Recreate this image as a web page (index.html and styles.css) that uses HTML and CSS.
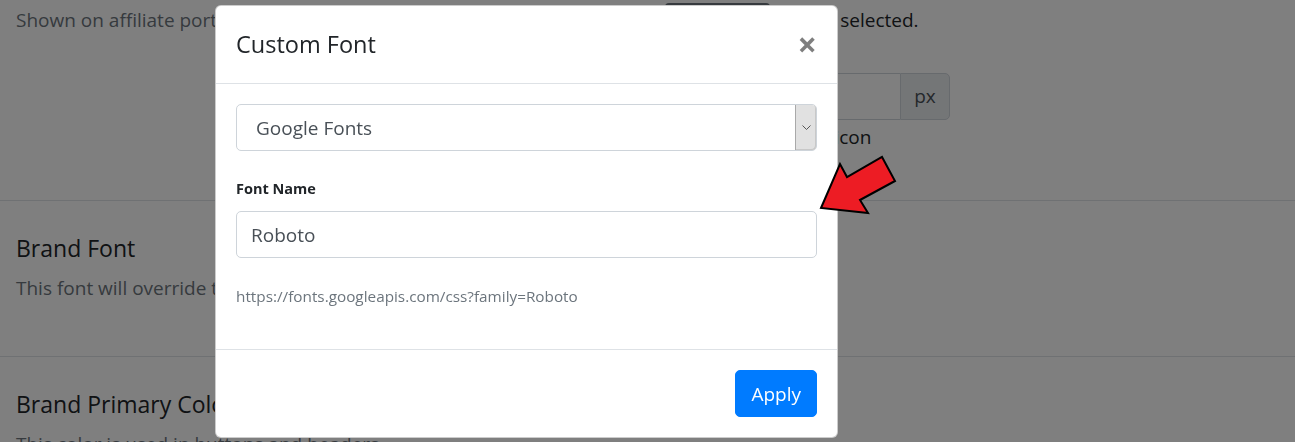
FILE: index.html
```html
<!DOCTYPE html>
<html lang="en">
<head>
<meta charset="utf-8">
<title>Custom Font</title>
<link rel="stylesheet" href="styles.css">
</head>
<body>
<main class="page">
  <section class="setting setting-first">
    <div class="s-left">
      <p class="muted first-desc">Shown on affiliate portal header and in emails.</p>
    </div>
    <div class="s-right">
      <div class="upload">
        <span class="file-btn">Choose file</span>
        <span class="upload-text">No file selected.</span>
      </div>
      <div class="input-group">
        <span class="ig-input">32</span>
        <span class="ig-addon">px</span>
      </div>
      <p class="hint">Size of the header icon</p>
    </div>
  </section>
  <section class="setting">
    <div class="s-left">
      <h3>Brand Font</h3>
      <p class="muted">This font will override the default portal font.</p>
    </div>
    <div class="s-right"></div>
  </section>
  <section class="setting">
    <div class="s-left">
      <h3>Brand Primary Color</h3>
      <p class="muted">This color is used in buttons and headers.</p>
    </div>
    <div class="s-right"></div>
  </section>
</main>

<div class="backdrop"></div>

<div class="modal" role="dialog" aria-label="Custom Font">
  <div class="modal-header">
    <h5 class="modal-title">Custom Font</h5>
    <button class="close" type="button" aria-label="Close">×</button>
  </div>
  <div class="modal-body">
    <div class="form-group">
      <div class="select">
        <span class="select-value">Google Fonts</span>
        <span class="select-btn">
          <svg width="9" height="5" viewBox="0 0 9 5"><path d="M0.5 0.5 L4.5 4.5 L8.5 0.5" fill="none" stroke="#555" stroke-width="1"/></svg>
        </span>
      </div>
    </div>
    <div class="form-group">
      <label class="label" for="fontName">Font Name</label>
      <input class="form-control" id="fontName" type="text" value="Roboto">
    </div>
    <p class="help"><small>https://fonts.googleapis.com/css?family=Roboto</small></p>
  </div>
  <div class="modal-footer">
    <button class="btn-apply" type="button">Apply</button>
  </div>
</div>

<svg class="arrow" width="90" height="72" viewBox="0 0 90 72">
  <polygon points="6,58 25,14 32,27 67,7 80,31 45,50 53,63" fill="#ed1c24" stroke="#000" stroke-width="2" stroke-linejoin="miter"/>
</svg>
</body>
</html>
```

FILE: styles.css
```css
* { box-sizing: border-box; }

html, body {
  margin: 0;
  height: 442px;
  overflow: hidden;
}

body {
  font-family: "Open Sans", "Noto Sans", sans-serif;
  font-size: 19px;
  line-height: 30px;
  color: #212529;
  background: #fff;
}

p { margin: 0; }

.page { width: 100%; }

.setting {
  display: grid;
  grid-template-columns: 649px 1fr;
  padding: 32px 16px 33px;
  border-bottom: 1px solid #dee2e6;
}

.setting-first {
  padding: 0 16px 48px;
}

.setting h3 {
  font-size: 23px;
  font-weight: 400;
  line-height: 30px;
  margin: 0 0 10px;
}

.muted {
  color: #6c757d;
  margin-bottom: 20px;
}

.first-desc { margin-top: 5px; }

.upload {
  display: flex;
  align-items: center;
  gap: 8px;
  margin-top: 3px;
  height: 34px;
  white-space: nowrap;
}

.file-btn {
  display: block;
  width: 105px;
  height: 34px;
  background: #6c757d;
  border-radius: 4px;
  color: #fff;
  font-size: 16px;
  line-height: 34px;
  text-align: center;
}

.upload-text { color: #212529; }

.input-group {
  display: flex;
  margin-top: 36px;
  height: 47px;
}

.ig-input {
  width: 235px;
  border: 1px solid #ced4da;
  border-right: 0;
  border-radius: 5px 0 0 5px;
  padding: 7.5px 15px;
  color: #495057;
}

.ig-addon {
  width: 50px;
  background: #e9ecef;
  border: 1px solid #ced4da;
  border-radius: 0 5px 5px 0;
  color: #495057;
  text-align: center;
  line-height: 45px;
}

.hint {
  margin-top: 2px;
  padding-left: 5px;
  color: #212529;
}

/* overlay */
.backdrop {
  position: fixed;
  inset: 0;
  background: rgba(0, 0, 0, 0.5);
}

.modal {
  position: fixed;
  left: 215px;
  top: 5px;
  width: 623px;
  background: #fff;
  border: 1px solid rgba(0, 0, 0, 0.2);
  border-radius: 6px;
}

.modal-header {
  display: flex;
  align-items: flex-start;
  justify-content: space-between;
  padding: 20px;
  border-bottom: 1px solid #dee2e6;
}

.modal-title {
  margin: 0;
  font-size: 23.5px;
  font-weight: 400;
  line-height: 37px;
}

.close {
  border: 0;
  background: transparent;
  padding: 0;
  margin: 0;
  font-family: "Open Sans", sans-serif;
  font-size: 34px;
  font-weight: 700;
  line-height: 37px;
  color: #000;
  opacity: 0.5;
}

.modal-body { padding: 20px; }

.form-group { margin-bottom: 20px; }

.select {
  display: flex;
  height: 47px;
  border: 1px solid #ced4da;
  border-radius: 5px;
  padding: 0 0 0 19px;
  align-items: stretch;
}

.select-value {
  flex: 1;
  line-height: 46px;
  color: #495057;
}

.select-btn {
  width: 21px;
  background: #e1e1e1;
  border-left: 1px solid #a9a9a9;
  border-radius: 0 4px 4px 0;
  box-shadow: inset -1px -1px 0 #c8c8c8;
  display: flex;
  align-items: center;
  justify-content: center;
}

.label {
  display: block;
  font-size: 14.5px;
  font-weight: 700;
  line-height: 30px;
  padding-top: 3px;
  margin-bottom: 7px;
}

.form-control {
  display: block;
  width: 100%;
  height: 47px;
  padding: 7.5px 14px;
  font-family: inherit;
  font-size: 19px;
  line-height: 30px;
  color: #495057;
  border: 1px solid #ced4da;
  border-radius: 5px;
  background: #fff;
}

.help {
  margin-bottom: 20px;
  line-height: 30px;
  font-size: 15.3px;
  color: #6c757d;
  padding-top: 3px;
  height: 31px;
}

.help small {
  font-size: 15.3px;
}

.modal-footer {
  display: flex;
  justify-content: flex-end;
  padding: 15px;
  border-top: 1px solid #dee2e6;
}

.btn-apply {
  margin: 5px;
  height: 47px;
  padding: 7.5px 15px;
  font-family: inherit;
  font-size: 19px;
  line-height: 30px;
  color: #fff;
  background: #007bff;
  border: 1px solid #007bff;
  border-radius: 5px;
}

.arrow {
  position: fixed;
  left: 815px;
  top: 150px;
}
```
